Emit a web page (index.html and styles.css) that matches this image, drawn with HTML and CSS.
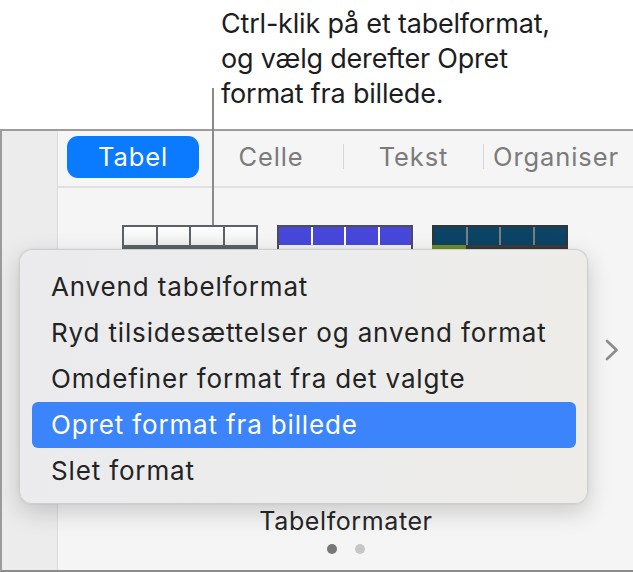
FILE: index.html
```html
<!DOCTYPE html>
<html lang="da">
<head>
<meta charset="utf-8">
<title>Tabelformater</title>
<link rel="stylesheet" href="styles.css">
</head>
<body>
<div class="stage">
  <p class="callout">Ctrl-klik på et tabelformat,<br>og vælg derefter Opret<br>format fra billede.</p>
  <div class="leader"></div>

  <div class="window">
    <div class="sidebar"></div>
    <div class="main">
      <div class="tabbar">
        <div class="tab tab-active">Tabel</div>
        <div class="tab tab-celle">Celle</div>
        <div class="sep"></div>
        <div class="tab tab-tekst">Tekst</div>
        <div class="sep"></div>
        <div class="tab tab-org">Organiser</div>
      </div>
      <div class="gallery">
        <div class="thumbs">
          <div class="thumb thumb-plain">
            <div class="cells"><span></span><span></span><span></span><span></span></div>
            <div class="foot"></div>
          </div>
          <div class="thumb thumb-blue">
            <div class="cells"><span></span><span></span><span></span><span></span></div>
            <div class="foot"></div>
          </div>
          <div class="thumb thumb-teal">
            <div class="cells"><span></span><span></span><span></span><span></span></div>
            <div class="foot"></div>
          </div>
        </div>
        <svg class="chevron" width="16" height="24" viewBox="0 0 16 24"><path d="M3 3 L12.5 12 L3 21" fill="none" stroke="#8d8d8d" stroke-width="2.7" stroke-linecap="round" stroke-linejoin="round"/></svg>
      </div>
      <div class="caption">Tabelformater</div>
      <div class="dots"><span class="dot dot-on"></span><span class="dot"></span></div>
    </div>
  </div>

  <div class="menu">
    <div class="item">Anvend tabelformat</div>
    <div class="item">Ryd tilsidesættelser og anvend format</div>
    <div class="item">Omdefiner format fra det valgte</div>
    <div class="item item-hi">Opret format fra billede</div>
    <div class="item">Slet format</div>
  </div>
</div>
</body>
</html>
```
FILE: styles.css
```css
* { box-sizing: border-box; }
html, body { margin: 0; padding: 0; background: #ffffff; }
body { font-family: Inter, "Noto Sans", "Liberation Sans", sans-serif; }

.stage {
  position: relative;
  width: 633px;
  height: 572px;
  overflow: hidden;
}

.callout {
  margin: 0;
  height: 129px;
  padding: 6px 0 0 221px;
  font-size: 27px;
  line-height: 35px;
  color: #1d1d1f;
  letter-spacing: -0.2px;
}

.leader {
  position: absolute;
  left: 212px;
  top: 88px;
  width: 2px;
  height: 137px;
  background: #8a8a8a;
  z-index: 2;
}

.window {
  display: flex;
  height: 443px;
  border-top: 2px solid #9c9c9c;
  border-left: 2px solid #9c9c9c;
  border-bottom: 2px solid #8c8c8c;
}

.sidebar {
  width: 56px;
  flex: none;
  background: #ececec;
  border-right: 1px solid #dcdcdc;
}

.main {
  flex: 1;
  background: #f5f5f5;
  display: flex;
  flex-direction: column;
}

.tabbar {
  height: 57px;
  flex: none;
  display: flex;
  align-items: center;
  padding-left: 9px;
  border-bottom: 2px solid #e0e0e0;
  font-size: 25.5px;
  letter-spacing: 0.9px;
  color: #7b7b7b;
}

.tab { text-align: center; }
.tab-active {
  width: 132px;
  height: 42px;
  line-height: 42px;
  border-radius: 11px;
  background: #0a7aff;
  color: #ffffff;
  margin-top: -4px;
}
.tab-celle { width: 144px; }
.tab-tekst { width: 139px; }
.tab-org { width: 150px; text-align: left; padding-left: 9px; }
.sep {
  width: 1px;
  height: 25px;
  background: #d8d8d8;
  margin-top: -4px;
}
.tab-celle, .tab-tekst, .tab-org { margin-top: -4px; }

.gallery {
  flex: 1;
  display: flex;
  align-items: flex-start;
  position: relative;
}

.thumbs {
  display: flex;
  gap: 19px;
  padding: 37px 0 0 64px;
}

.thumb {
  width: 136px;
  height: 40px;
  display: flex;
  flex-direction: column;
}
.thumb .cells {
  display: flex;
  height: 20px;
  border: 2px solid #5d6166;
  border-bottom: none;
  gap: 2px;
  background: #5d6166;
}
.thumb .cells span { flex: 1; }
.thumb .foot { height: 8px; background: #5d6166; }

.thumb-plain .cells span { background: linear-gradient(#ffffff, #eeeeee); }

.thumb-blue .cells { background: #ffffff; border-color: #4d4d55; gap: 2px; }
.thumb-blue .cells span { background: #4747dc; }
.thumb-blue .foot { background: #f0f0f0; border-left: 2px solid #4d4d55; border-right: 2px solid #4d4d55; }

.thumb-teal .cells { background: #7a7f84; border-color: #333537; }
.thumb-teal .cells span { background: #0c4466; }
.thumb-teal .foot { background: linear-gradient(90deg, #6f8d22 25%, #3a3a3a 25%); }

.chevron {
  position: absolute;
  right: 14px;
  top: 150px;
}

.caption {
  text-align: center;
  font-size: 25px;
  letter-spacing: 0.6px;
  color: #262626;
  height: 34px;
  line-height: 34px;
  margin-top: 3px;
  margin-bottom: 6px;
}

.dots {
  display: flex;
  justify-content: center;
  gap: 18px;
  height: 26px;
}
.dot {
  width: 10px;
  height: 10px;
  border-radius: 50%;
  background: #c6c6c6;
}
.dot-on { background: #777777; }

.menu {
  position: absolute;
  left: 19px;
  top: 249px;
  width: 569px;
  height: 255px;
  padding: 14px 11px 0 12px;
  border-radius: 13px;
  background: linear-gradient(100deg, #ebebed 0%, #ececed 50%, #edece8 100%);
  border: 1px solid rgba(0,0,0,0.12);
  box-shadow: 0 8px 24px rgba(0,0,0,0.18), 0 0 2px rgba(0,0,0,0.1);
  z-index: 3;
  font-size: 26px;
  letter-spacing: 0.85px;
  color: #232323;
}

.item {
  height: 46px;
  line-height: 46px;
  padding-left: 19px;
  border-radius: 6px;
}
.item-hi {
  background: #3b84fb;
  color: #ffffff;
}
```
